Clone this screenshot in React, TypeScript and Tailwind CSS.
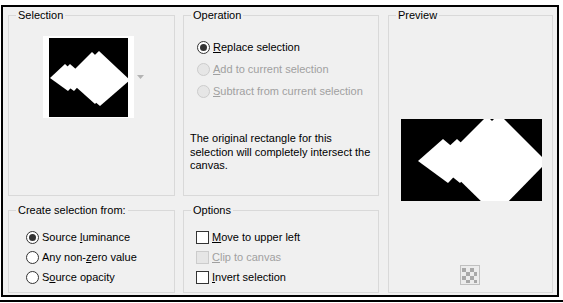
import React from 'react';

const Group: React.FC<{ title: string; className?: string; children?: React.ReactNode }> = ({ title, className = '', children }) => (
    <div className={`relative border border-[#d9d9d9] ${className}`}>
        <span className="absolute -top-[8px] left-[7px] bg-[#f0f0f0] px-[2px] leading-[14px]">{title}</span>
        {children}
    </div>
);

const Radio: React.FC<{ checked?: boolean; disabled?: boolean; children: React.ReactNode }> = ({ checked, disabled, children }) => (
    <div className={`flex items-center ${disabled ? 'text-[#a0a0a0]' : 'text-black'}`}>
        <span
            className={`flex h-[13px] w-[13px] shrink-0 items-center justify-center rounded-full border ${
                disabled ? 'border-[#cccccc] bg-[#e6e6e6]' : 'border-[#333333] bg-white'
            }`}
        >
            {checked && <span className="h-[7px] w-[7px] rounded-full bg-[#333333]" />}
        </span>
        <span className="ml-[3px] whitespace-nowrap">{children}</span>
    </div>
);

const Check: React.FC<{ disabled?: boolean; children: React.ReactNode }> = ({ disabled, children }) => (
    <div className={`flex items-center ${disabled ? 'text-[#a0a0a0]' : 'text-black'}`}>
        <span
            className={`h-[13px] w-[13px] shrink-0 border ${
                disabled ? 'border-[#cccccc] bg-[#e6e6e6]' : 'border-[#333333] bg-white'
            }`}
        />
        <span className="ml-[3px] whitespace-nowrap">{children}</span>
    </div>
);

const U: React.FC<{ children: React.ReactNode }> = ({ children }) => (
    <span className="underline underline-offset-[1px]">{children}</span>
);

// selection thumbnail, whole canvas squeezed into a square
const Thumb = () => (
    <svg width="79" height="79" viewBox="0 0 79 79">
        <rect width="79" height="79" fill="#000" />
        <g fill="#fff">
            <polygon points="1,40 16,26 31,40 19,53" />
            <polygon points="7,40 21,26 37,40 25,53" />
            <polygon points="17,40 43,14 70,40 46,66" />
            <polygon points="20,42 50,13 81,42 51,68" />
        </g>
    </svg>
);

const PreviewImage = () => (
    <svg width="141" height="82" viewBox="0 0 141 82">
        <rect width="141" height="82" fill="#000" />
        <g fill="#fff">
            <polygon points="17,42 42,20 68,42 47,64" />
            <polygon points="32,42 56,20 80,42 59,64" />
            <polygon points="40,43 86,-3 132,43 87,89" />
            <polygon points="50,43 98,-5 146,43 99,91" />
        </g>
    </svg>
);

const CheckerIcon = () => (
    <div className="flex h-[20px] w-[20px] items-center justify-center border border-[#c0c0c0] bg-[#ececec]">
        <svg width="15" height="15" viewBox="0 0 15 15">
            <g fill="#a8a8a8">
                <rect x="0" y="0" width="4" height="4" />
                <rect x="8" y="0" width="4" height="4" />
                <rect x="4" y="4" width="4" height="4" />
                <rect x="12" y="4" width="3" height="4" />
                <rect x="0" y="8" width="4" height="4" />
                <rect x="8" y="8" width="4" height="4" />
                <rect x="4" y="12" width="4" height="3" />
                <rect x="12" y="12" width="3" height="3" />
            </g>
        </svg>
    </div>
);

export default function App() {
    return (
        <div className="h-[303px] w-[563px] overflow-hidden bg-white pl-[1px] pt-[5px] font-['Liberation_Sans',Arial,sans-serif] text-[11px] text-black">
            <div className="h-[292px] w-[558px] border-2 border-black bg-[#f0f0f0] pl-[5px] pt-[8px]">
                <div className="grid grid-cols-[167px_196px_166px] grid-rows-[181px_83px] gap-x-[8px] gap-y-[14px]">
                    {/* Selection */}
                    <Group title="Selection">
                        <div className="ml-[34px] mt-[20px] flex items-center">
                            <div className="flex h-[82px] w-[91px] items-center justify-center bg-white">
                                <Thumb />
                            </div>
                            <svg width="7" height="4" viewBox="0 0 7 4" className="ml-[3px]">
                                <polygon points="0,0 7,0 3.5,4" fill="#b4b4b4" />
                            </svg>
                        </div>
                    </Group>

                    {/* Operation */}
                    <Group title="Operation">
                        <div className="ml-[13px] mt-[20px] flex flex-col">
                            <div className="flex h-[22px] items-center">
                                <Radio checked><U>R</U>eplace selection</Radio>
                            </div>
                            <div className="flex h-[22px] items-center">
                                <Radio disabled><U>A</U>dd to current selection</Radio>
                            </div>
                            <div className="flex h-[22px] items-center">
                                <Radio disabled><U>S</U>ubtract from current selection</Radio>
                            </div>
                        </div>
                        <p className="ml-[6px] mt-[30px] leading-[13.5px]">
                            The original rectangle for this<br />
                            selection will completely intersect the<br />
                            canvas.
                        </p>
                    </Group>

                    {/* Preview */}
                    <Group title="Preview" className="row-span-2 ml-[1px] flex flex-col">
                        <div className="ml-[12px] mt-[103px]">
                            <PreviewImage />
                        </div>
                        <div className="mt-[64px] flex justify-center pr-[2px]">
                            <CheckerIcon />
                        </div>
                    </Group>

                    {/* Create selection from */}
                    <Group title="Create selection from:">
                        <div className="ml-[17px] mt-[16px] flex flex-col">
                            <div className="flex h-[20px] items-center">
                                <Radio checked>Source <U>l</U>uminance</Radio>
                            </div>
                            <div className="flex h-[20px] items-center">
                                <Radio>Any non-<U>z</U>ero value</Radio>
                            </div>
                            <div className="flex h-[20px] items-center">
                                <Radio>S<U>o</U>urce opacity</Radio>
                            </div>
                        </div>
                    </Group>

                    {/* Options */}
                    <Group title="Options">
                        <div className="ml-[12px] mt-[16px] flex flex-col">
                            <div className="flex h-[20px] items-center">
                                <Check><U>M</U>ove to upper left</Check>
                            </div>
                            <div className="flex h-[20px] items-center">
                                <Check disabled><U>C</U>lip to canvas</Check>
                            </div>
                            <div className="flex h-[20px] items-center">
                                <Check><U>I</U>nvert selection</Check>
                            </div>
                        </div>
                    </Group>
                </div>
            </div>
            <div className="ml-[-1px] mt-[3px] h-[2px] w-[563px] bg-black" />
        </div>
    );
}
